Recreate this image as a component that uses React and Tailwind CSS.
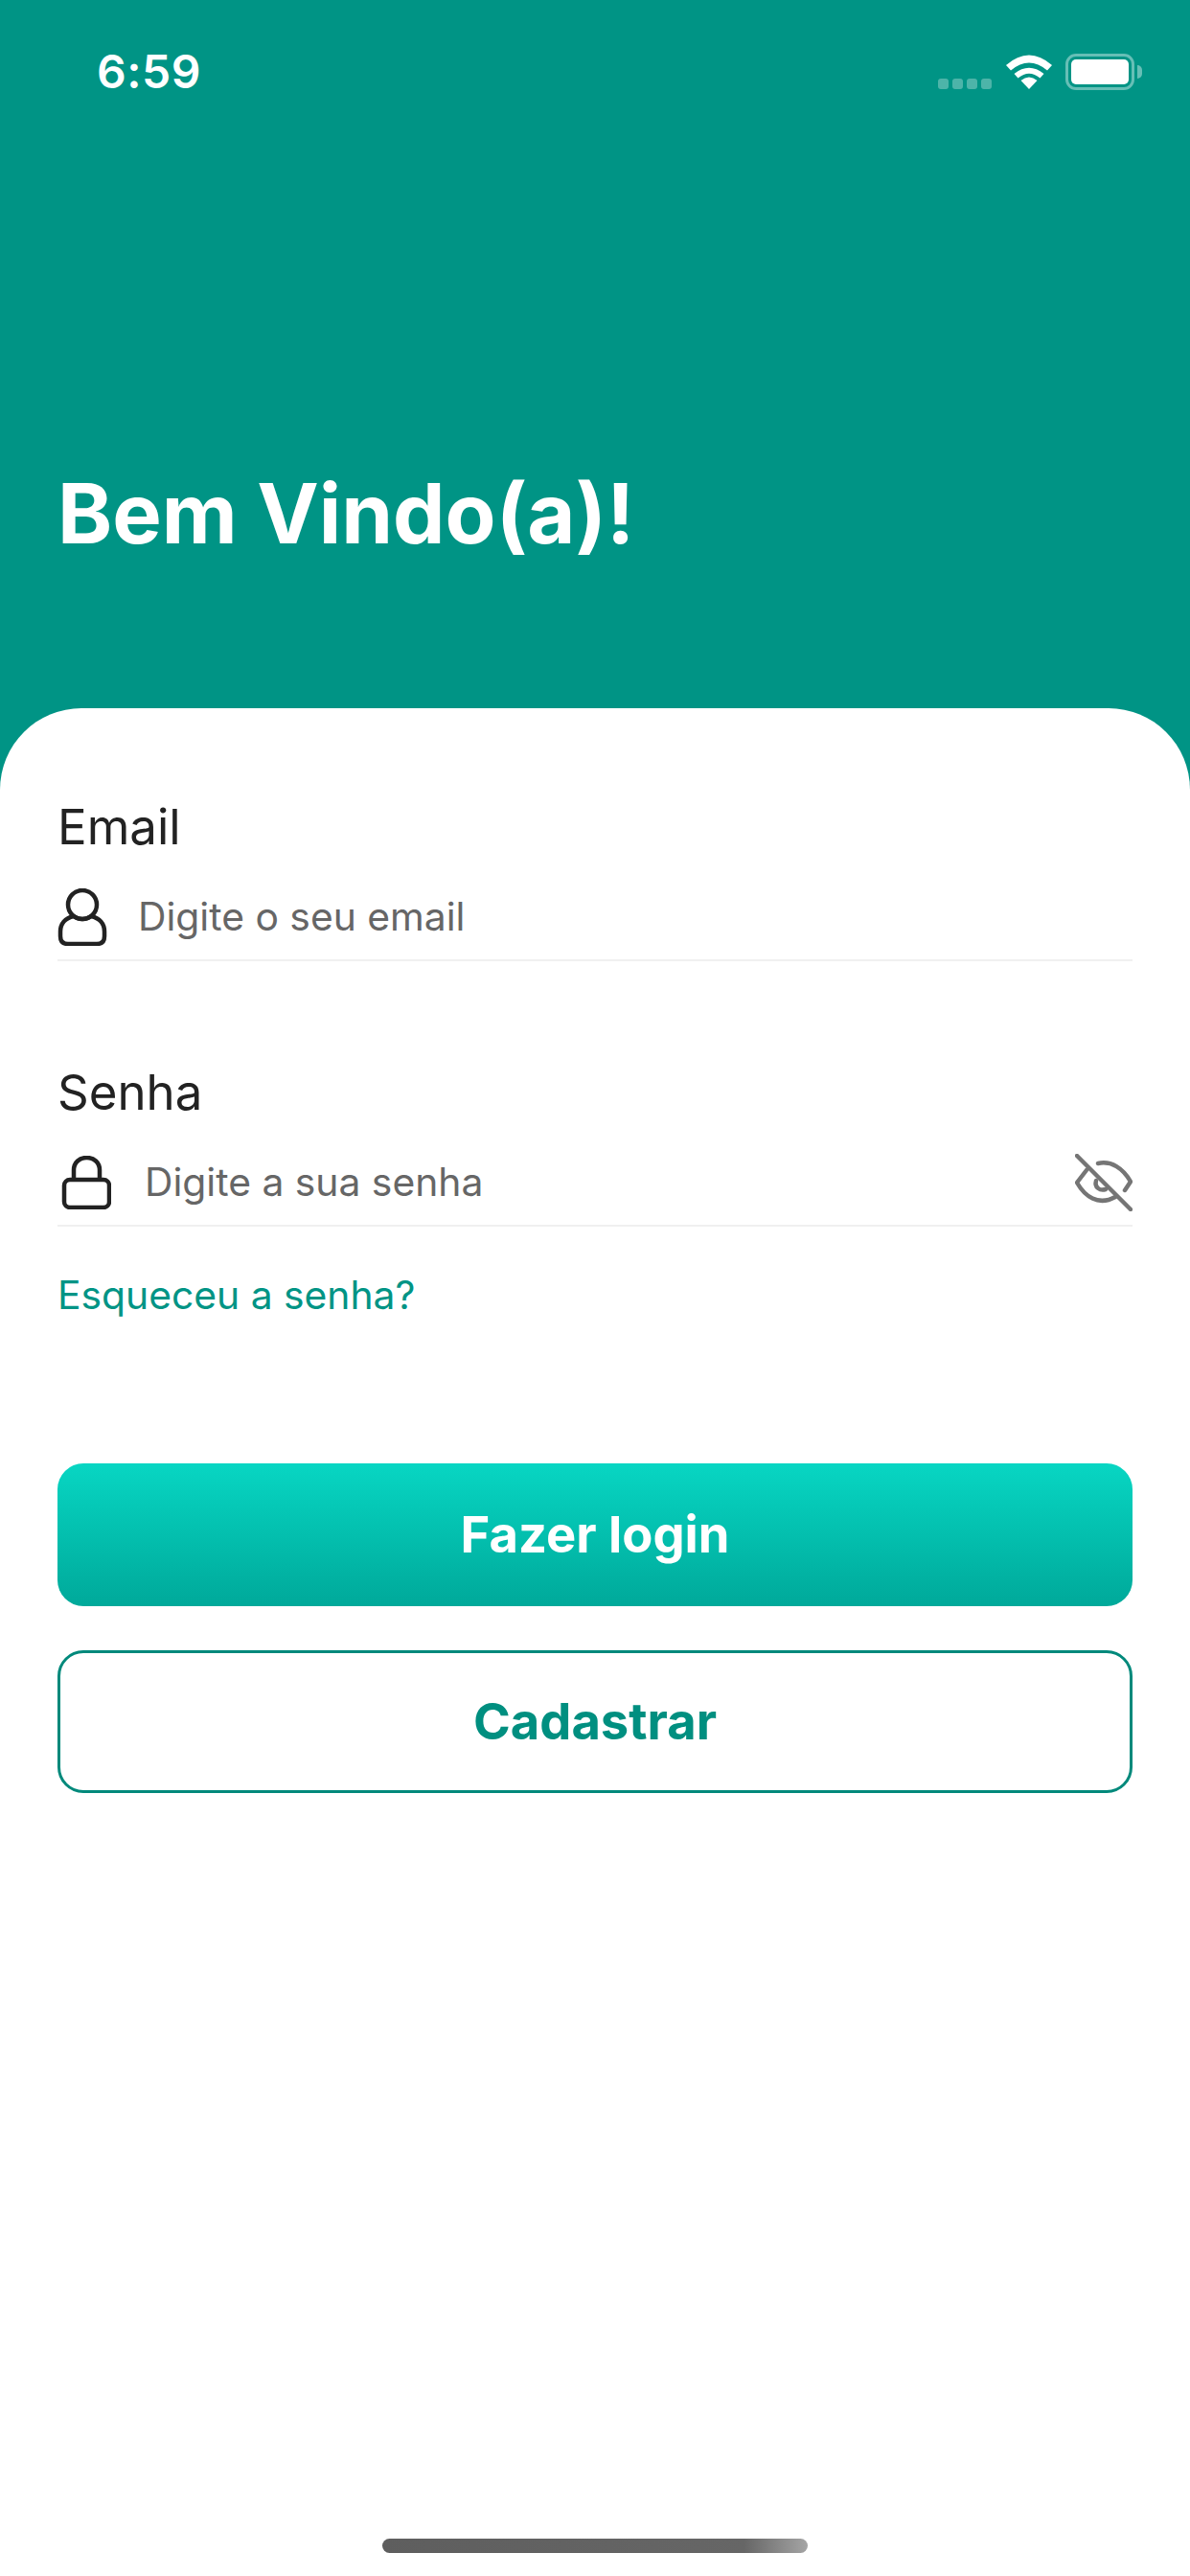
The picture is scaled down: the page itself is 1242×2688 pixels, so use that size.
const FONT = "font-['Inter',sans-serif]";

function WifiIcon() {
  return (
    <svg width="50" height="38" viewBox="0 0 50 38" className="block">
      <path d="M25 37 L16.5 28 Q25 21 33.5 28 Z" fill="#fff" />
      <path d="M9.5 21 L13.5 25.5 Q25 16 36.5 25.5 L40.5 21 Q25 8.500 9.500 21 Z" fill="#fff" />
      <path d="M1 12 L6 17.500 Q25 1.500 44 17.500 L49 12 Q25 -9 1 12 Z" fill="#fff" />
    </svg>
  );
}

function BatteryIcon() {
  return (
    <div className="flex items-center">
      <div className="w-[72px] h-[38px] rounded-[11px] border-[3px] border-white/40 p-[3px]">
        <div className="w-full h-full rounded-[5px] bg-white" />
      </div>
      <div className="ml-[3px] w-[5px] h-[14px] rounded-r-full bg-white/40" />
    </div>
  );
}

function UserIcon() {
  return (
    <svg width="52" height="60" viewBox="0 0 52 60" fill="none" stroke="#222" strokeWidth="4.5" className="block">
      <circle cx="26" cy="17" r="15" />
      <path d="M17 29 C8 31 3 37 3 45 V50 Q3 58 11 58 H41 Q49 58 49 50 V45 C49 37 44 31 35 29 C30 33 22 33 17 29 Z" strokeLinejoin="round" />
    </svg>
  );
}

function LockIcon() {
  return (
    <svg width="52" height="56" viewBox="0 0 52 56" fill="none" stroke="#222" strokeWidth="4.5" className="block">
      <rect x="3" y="25" width="47" height="29" rx="6" />
      <path d="M13 25 V15 C13 7 19 2 26.500 2 C34 2 40 7 40 15 V25" />
    </svg>
  );
}

function EyeOffIcon() {
  return (
    <svg width="60" height="60" viewBox="0 0 60 60" fill="none" stroke="#757575" strokeWidth="4.5" strokeLinecap="round" strokeLinejoin="round" className="block">
      <path d="M2 2 L58 58" />
      <path d="M24 10 C38 7 50 15 58 29 L52 38" />
      <path d="M12 17 L2 30 C10 44 24 55 42 45" />
      <path d="M22 28 C20 35 26 39 32 37" />
    </svg>
  );
}

function Field({ label, icon, iconClass, placeholder, trailing, className }) {
  return (
    <div className={className}>
      <div className="text-[51px] leading-[60px] text-[#222222]">{label}</div>
      <div className="mt-[19px] h-[91px] flex items-center border-b-[2px] border-[#f0f0f0]">
        <div className={iconClass}>{icon}</div>
        <div className="text-[40.8px] text-[#666666]">{placeholder}</div>
        {trailing && <div className="ml-auto">{trailing}</div>}
      </div>
    </div>
  );
}

export default function App() {
  return (
    <div className={`${FONT} w-[1242px] h-[2688px] bg-[#009485] flex flex-col overflow-hidden`}>
      <div className="h-[739px] shrink-0 flex flex-col">
        <div className="h-[148px] pl-[101px] pr-[50px] pt-[46px] flex items-start justify-between">
          <div className="text-[48px] leading-[58px] font-semibold text-white tracking-[0.5px]">6:59</div>
          <div className="flex items-center mt-[10px]">
            <div className="flex gap-[4px] mt-[24px] mr-[14px]">
              <div className="w-[11px] h-[11px] rounded-[3px] bg-white/30" />
              <div className="w-[11px] h-[11px] rounded-[3px] bg-white/30" />
              <div className="w-[11px] h-[11px] rounded-[3px] bg-white/30" />
              <div className="w-[11px] h-[11px] rounded-[3px] bg-white/30" />
            </div>
            <WifiIcon />
            <div className="ml-[13px]"><BatteryIcon /></div>
          </div>
        </div>
        <h1 className="mt-[338px] pl-[60px] text-[86.5px] leading-[100px] font-bold text-white">Bem Vindo(a)!</h1>
      </div>

      <div className="flex-1 bg-white rounded-t-[85px] px-[60px] pt-[94px] flex flex-col">
        <Field
          label="Email"
          icon={<UserIcon />}
          iconClass="w-[84px] shrink-0"
          placeholder="Digite o seu email"
        />
        <Field
          className="mt-[107px]"
          label="Senha"
          icon={<LockIcon />}
          iconClass="w-[91px] shrink-0 pl-[4px]"
          placeholder="Digite a sua senha"
          trailing={<EyeOffIcon />}
        />
        <div className="mt-[46px] text-[40.8px] leading-[50px] text-[#009485]">Esqueceu a senha?</div>

        <div className="mt-[151px] h-[149px] rounded-[27px] bg-gradient-to-b from-[#08d6c3] to-[#00a99a] flex items-center justify-center text-[52.5px] font-bold text-white">
          Fazer login
        </div>
        <div className="mt-[46px] h-[149px] rounded-[27px] border-[3px] border-[#00897b] flex items-center justify-center text-[52.5px] font-bold text-[#008f80]">
          Cadastrar
        </div>

        <div className="mt-auto mb-[24px] mx-auto w-[444px] h-[15px] rounded-full bg-gradient-to-r from-[#5e5e5e] via-[#666666] via-[85%] to-[#a5a5a5]" />
      </div>
    </div>
  );
}
